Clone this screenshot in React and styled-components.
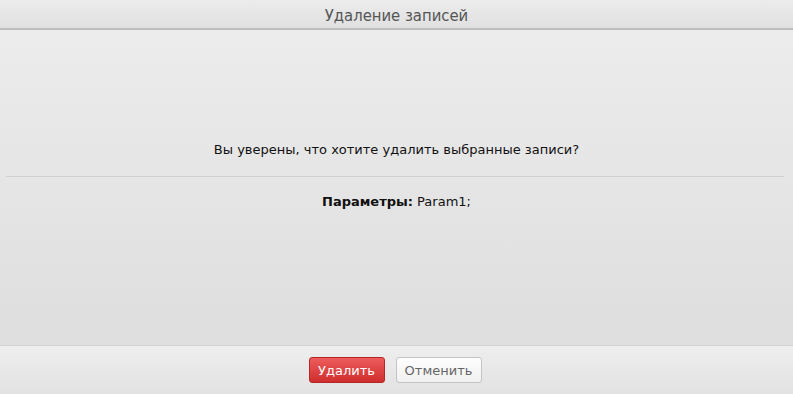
import React from "react";
import styled, { createGlobalStyle } from "styled-components";

const Global = createGlobalStyle`
  html, body { margin: 0; padding: 0; height: 100%; }
  body { font-family: "DejaVu Sans", Verdana, sans-serif; background: #e6e6e6; }
  #root { height: 100%; }
`;

const Dialog = styled.div`
  width: 793px;
  height: 394px;
  display: flex;
  flex-direction: column;
  overflow: hidden;
`;

const Header = styled.div`
  height: 30px;
  flex: none;
  display: flex;
  align-items: center;
  justify-content: center;
  box-sizing: border-box;
  padding-top: 2px;
  background: linear-gradient(#ececec, #e0e0e0);
  border-bottom: 2px solid #bdbdbd;
  color: #555;
  font-family: "DejaVu Sans Condensed", "DejaVu Sans", sans-serif;
  font-size: 16.5px;
`;

const Body = styled.div`
  flex: 1;
  display: flex;
  flex-direction: column;
  align-items: stretch;
  background: linear-gradient(#ececec, #dedede);
  padding: 0 6px;
`;

const Question = styled.div`
  margin-top: 111px;
  text-align: center;
  font-size: 13px;
  color: #111;
  height: 18px;
  line-height: 18px;
`;

const Divider = styled.div`
  margin-top: 17px;
  margin-right: 3px;
  height: 1px;
  background: #cfcfcf;
`;

const Params = styled.div`
  margin-top: 16px;
  text-align: center;
  font-size: 13px;
  color: #111;
  line-height: 18px;
  b { font-weight: bold; }
`;

const Footer = styled.div`
  height: 49px;
  flex: none;
  display: flex;
  justify-content: center;
  align-items: center;
  gap: 11px;
  padding-right: 3px;
  box-sizing: border-box;
  border-top: 1px solid #d2d2d2;
  background: linear-gradient(#eeeeee, #e2e2e2);
`;

const Button = styled.button`
  height: 26px;
  box-sizing: border-box;
  border-radius: 3px;
  font-family: "DejaVu Sans", Verdana, sans-serif;
  font-size: 13px;
  padding: 0;
  width: ${(p) => p.$w}px;
  cursor: pointer;
  ${(p) =>
    p.$danger
      ? `
    color: #fff;
    background: linear-gradient(#ee5c5c, #cf2e2e);
    border: 1px solid #b72727;
  `
      : `
    color: #666;
    background: linear-gradient(#fefefe, #f0f0f0);
    border: 1px solid #c4c4c4;
  `}
`;

export default function App() {
  return (
    <>
      <Global />
      <Dialog>
        <Header>Удаление записей</Header>
        <Body>
          <Question>Вы уверены, что хотите удалить выбранные записи?</Question>
          <Divider />
          <Params>
            <b>Параметры:</b> Param1;
          </Params>
        </Body>
        <Footer>
          <Button $danger $w={76}>Удалить</Button>
          <Button $w={86}>Отменить</Button>
        </Footer>
      </Dialog>
    </>
  );
}
